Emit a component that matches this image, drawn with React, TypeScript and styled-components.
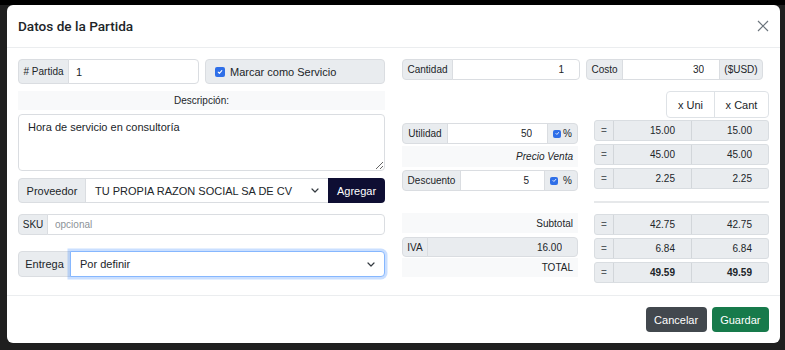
import React from 'react';
import styled, { createGlobalStyle, css } from 'styled-components';

const SMALL = 10;

const GlobalStyle = createGlobalStyle`
  html, body {
    margin: 0;
    padding: 0;
    background: #1f1f1f;
  }
  body {
    font-family: "Liberation Sans", Arial, sans-serif;
    color: #212529;
  }
  * {
    box-sizing: border-box;
  }
`;

const Page = styled.div`
  width: 785px;
  height: 350px;
  padding: 5px 0 0 7px;
  background: linear-gradient(#000 0 5px, #1f1f1f 5px);
  overflow: hidden;
`;

const Modal = styled.div`
  width: 773px;
  height: 338px;
  background: #fff;
  border-radius: 6px;
  display: flex;
  flex-direction: column;
  overflow: hidden;
`;

const Header = styled.div`
  height: 43px;
  flex: none;
  display: flex;
  align-items: center;
  justify-content: space-between;
  padding: 0 11px;
  border-bottom: 1px solid #ebedef;
`;

const Title = styled.h5`
  margin: 0;
  font-family: Roboto, "Liberation Sans", Arial, sans-serif;
  font-weight: 500;
  font-size: 13.6px;
  color: #212529;
`;

const CloseButton = styled.button`
  width: 12px;
  height: 12px;
  padding: 0;
  border: none;
  background: none;
  display: flex;
  align-items: center;
  justify-content: center;
`;

const Body = styled.div`
  flex: 1;
  display: grid;
  grid-template-columns: 367px 367px;
  column-gap: 17px;
  padding: 11px;
  border-bottom: 1px solid #ebedef;
`;

const Column = styled.div`
  display: flex;
  flex-direction: column;
`;

const Row = styled.div<{ $gap?: number; $mt?: number }>`
  display: flex;
  gap: ${(p) => p.$gap ?? 0}px;
  margin-top: ${(p) => p.$mt ?? 0}px;
`;

const Group = styled.div<{ $h: number; $w?: number; $mt?: number }>`
  display: flex;
  height: ${(p) => p.$h}px;
  width: ${(p) => (p.$w ? `${p.$w}px` : '100%')};
  margin-top: ${(p) => p.$mt ?? 0}px;
  flex: none;
  font-size: 11px;

  > * + * {
    margin-left: -1px;
  }
  > *:first-child {
    border-top-left-radius: 4px;
    border-bottom-left-radius: 4px;
  }
  > *:last-child {
    border-top-right-radius: 4px;
    border-bottom-right-radius: 4px;
  }
`;

const Addon = styled.span<{ $w: number; $fs?: number }>`
  width: ${(p) => p.$w}px;
  flex: none;
  display: flex;
  align-items: center;
  justify-content: center;
  gap: 2px;
  background: #e9ecef;
  border: 1px solid #dadde1;
  font-size: ${(p) => p.$fs ?? 11}px;
  color: #212529;
  white-space: nowrap;
`;

const Field = styled.input<{ $right?: boolean; $fs?: number; $muted?: boolean }>`
  flex: 1;
  min-width: 0;
  height: 100%;
  border: 1px solid #dadde1;
  background: ${(p) => (p.$muted ? '#e9ecef' : '#fff')};
  font-family: inherit;
  font-size: ${(p) => p.$fs ?? 11}px;
  color: #212529;
  outline: none;
  padding: ${(p) => (p.$right ? '0 15px 0 6px' : '0 7px')};
  text-align: ${(p) => (p.$right ? 'right' : 'left')};

  &::placeholder {
    color: #8c9298;
  }
`;

const SelectBox = styled.div<{ $focus?: boolean }>`
  flex: 1;
  min-width: 0;
  display: flex;
  align-items: center;
  justify-content: space-between;
  padding: 0 9px 0 9px;
  background: #fff;
  border: 1px solid #dadde1;
  font-size: 11px;
  color: #212529;
  white-space: nowrap;
  ${(p) =>
    p.$focus &&
    css`
      position: relative;
      z-index: 1;
      border-color: #86b7fe;
      box-shadow: 0 0 0 2.5px rgba(13, 110, 253, 0.22);
    `}
`;

const DarkButton = styled.button`
  width: 57px;
  flex: none;
  border: none;
  background: #0e0e33;
  color: #fff;
  font-family: inherit;
  font-size: 11px;
  padding: 0;
`;

const CheckPanel = styled.label`
  flex: 1;
  height: 25px;
  display: flex;
  align-items: center;
  gap: 5px;
  padding-left: 9px;
  background: #e9ecef;
  border: 1px solid #dadde1;
  border-radius: 4px;
  font-size: 11px;
`;

const Box = styled.span<{ $size: number }>`
  width: ${(p) => p.$size}px;
  height: ${(p) => p.$size}px;
  flex: none;
  border-radius: 2px;
  background: #2f6fe8;
  display: inline-flex;
  align-items: center;
  justify-content: center;
`;

const Bar = styled.div<{ $h: number; $mt?: number; $align: 'center' | 'right'; $italic?: boolean }>`
  height: ${(p) => p.$h}px;
  margin-top: ${(p) => p.$mt ?? 0}px;
  display: flex;
  align-items: center;
  justify-content: ${(p) => (p.$align === 'center' ? 'center' : 'flex-end')};
  padding: 0 5px;
  background: #f8f9fa;
  font-size: ${SMALL}px;
  font-style: ${(p) => (p.$italic ? 'italic' : 'normal')};
  color: #212529;
`;

const TextArea = styled.textarea`
  display: block;
  width: 100%;
  height: 57px;
  margin-top: 4px;
  padding: 6px 9px;
  border: 1px solid #dadde1;
  border-radius: 4px;
  font-family: inherit;
  font-size: 11px;
  color: #212529;
  resize: vertical;
  outline: none;
`;

const Calc = styled.div`
  display: grid;
  grid-template-columns: 176px 175px;
  column-gap: 16px;
  margin-top: 11px;
`;

const Stack = styled.div<{ $pt?: number }>`
  display: flex;
  flex-direction: column;
  padding-top: ${(p) => p.$pt ?? 0}px;
`;

const Tabs = styled.div`
  align-self: flex-end;
  display: grid;
  grid-template-columns: 47px 54px;
  height: 27px;
  border: 1px solid #dee2e6;
  border-radius: 4px;
  font-size: 11px;
`;

const Tab = styled.span`
  display: flex;
  align-items: center;
  justify-content: center;
  & + & {
    border-left: 1px solid #dee2e6;
  }
`;

const ResultRow = styled.div<{ $mt: number; $bold?: boolean }>`
  display: grid;
  grid-template-columns: 18px 78px 1fr;
  height: 21px;
  margin-top: ${(p) => p.$mt}px;
  background: #e9ecef;
  border: 1px solid #d9dde1;
  border-radius: 3px;
  font-size: ${SMALL}px;
  font-weight: ${(p) => (p.$bold ? 700 : 400)};
`;

const Cell = styled.span<{ $eq?: boolean }>`
  display: flex;
  align-items: center;
  justify-content: ${(p) => (p.$eq ? 'center' : 'flex-end')};
  padding-right: ${(p) => (p.$eq ? 0 : 16)}px;
  color: ${(p) => (p.$eq ? '#555b61' : '#212529')};
  font-weight: ${(p) => (p.$eq ? 400 : 'inherit')};
  & + & {
    border-left: 1px solid #d2d6da;
  }
`;

const Divider = styled.hr`
  margin: 12px 0 11px;
  border: none;
  height: 1.5px;
  background: #e6e8ea;
`;

const Footer = styled.div`
  height: 47px;
  flex: none;
  display: flex;
  align-items: center;
  justify-content: flex-end;
  gap: 5px;
  padding: 0 11px;
`;

const FooterButton = styled.button<{ $tone: 'dark' | 'green' }>`
  height: 25px;
  padding: 0 8.5px;
  border: none;
  border-radius: 4px;
  color: #fff;
  font-family: inherit;
  font-size: 11px;
  background: ${(p) => (p.$tone === 'dark' ? '#42484e' : '#177a4b')};
`;

const Chevron = () => (
  <svg width="8" height="5" viewBox="0 0 8 5" fill="none">
    <path d="M1 1l3 3 3-3" stroke="#343a40" strokeWidth="1.2" strokeLinecap="round" strokeLinejoin="round" />
  </svg>
);

const Check = ({ size }: { size: number }) => (
  <Box $size={size}>
    <svg width={size * 0.6} height={size * 0.6} viewBox="0 0 10 10" fill="none">
      <path d="M2 5.2l2 2 4-4.4" stroke="#fff" strokeWidth="1.8" strokeLinecap="round" strokeLinejoin="round" />
    </svg>
  </Box>
);

const results = [
  { a: '15.00', b: '15.00', mt: 2 },
  { a: '45.00', b: '45.00', mt: 3 },
  { a: '2.25', b: '2.25', mt: 3 },
];

const totals = [
  { a: '42.75', b: '42.75', mt: 0 },
  { a: '6.84', b: '6.84', mt: 3 },
  { a: '49.59', b: '49.59', mt: 3, bold: true },
];

export default function App() {
  return (
    <Page>
      <GlobalStyle />
      <Modal>
        <Header>
          <Title>Datos de la Partida</Title>
          <CloseButton aria-label="Cerrar">
            <svg width="12" height="12" viewBox="0 0 12 12">
              <path d="M1 1l10 10M11 1L1 11" stroke="#6c757d" strokeWidth="1.2" />
            </svg>
          </CloseButton>
        </Header>

        <Body>
          <Column>
            <Row $gap={6}>
              <Group $h={25} $w={181}>
                <Addon $w={51} $fs={SMALL}># Partida</Addon>
                <Field defaultValue="1" />
              </Group>
              <CheckPanel>
                <Check size={10} />
                Marcar como Servicio
              </CheckPanel>
            </Row>

            <Bar $h={19} $mt={7} $align="center">Descripción:</Bar>
            <TextArea defaultValue="Hora de servicio en consultoría" />

            <Group $h={25} $mt={7}>
              <Addon $w={68}>Proveedor</Addon>
              <SelectBox>
                TU PROPIA RAZON SOCIAL SA DE CV
                <Chevron />
              </SelectBox>
              <DarkButton>Agregar</DarkButton>
            </Group>

            <Group $h={21} $mt={11}>
              <Addon $w={30} $fs={SMALL}>SKU</Addon>
              <Field placeholder="opcional" $fs={SMALL} />
            </Group>

            <Group $h={26} $mt={16}>
              <Addon $w={53}>Entrega</Addon>
              <SelectBox $focus>
                Por definir
                <Chevron />
              </SelectBox>
            </Group>
          </Column>

          <Column>
            <Row $gap={6}>
              <Group $h={21} $w={178}>
                <Addon $w={51} $fs={SMALL}>Cantidad</Addon>
                <Field defaultValue="1" $right $fs={SMALL} />
              </Group>
              <Group $h={21} $w={177}>
                <Addon $w={37} $fs={SMALL}>Costo</Addon>
                <Field defaultValue="30" $right $fs={SMALL} />
                <Addon $w={44} $fs={SMALL}>($USD)</Addon>
              </Group>
            </Row>

            <Calc>
              <Stack $pt={32}>
                <Group $h={21}>
                  <Addon $w={46} $fs={SMALL}>Utilidad</Addon>
                  <Field defaultValue="50" $right $fs={SMALL} />
                  <Addon $w={31} $fs={SMALL}>
                    <Check size={8} />%
                  </Addon>
                </Group>
                <Bar $h={21} $mt={2} $align="right" $italic>
                  Precio Venta
                </Bar>
                <Group $h={21} $mt={3}>
                  <Addon $w={59} $fs={SMALL}>Descuento</Addon>
                  <Field defaultValue="5" $right $fs={SMALL} />
                  <Addon $w={34} $fs={SMALL}>
                    <Check size={8} />&nbsp;%
                  </Addon>
                </Group>

                <Bar $h={20} $mt={22} $align="right">Subtotal</Bar>
                <Group $h={20} $mt={4}>
                  <Addon $w={26} $fs={SMALL}>IVA</Addon>
                  <Field defaultValue="16.00" $right $muted $fs={SMALL} />
                </Group>
                <Bar $h={19} $mt={1} $align="right">TOTAL</Bar>
              </Stack>

              <Stack>
                <Tabs>
                  <Tab>x Uni</Tab>
                  <Tab>x Cant</Tab>
                </Tabs>
                {results.map((r, i) => (
                  <ResultRow key={i} $mt={r.mt}>
                    <Cell $eq>=</Cell>
                    <Cell>{r.a}</Cell>
                    <Cell>{r.b}</Cell>
                  </ResultRow>
                ))}
                <Divider />
                {totals.map((r, i) => (
                  <ResultRow key={i} $mt={r.mt} $bold={r.bold}>
                    <Cell $eq>=</Cell>
                    <Cell>{r.a}</Cell>
                    <Cell>{r.b}</Cell>
                  </ResultRow>
                ))}
              </Stack>
            </Calc>
          </Column>
        </Body>

        <Footer>
          <FooterButton $tone="dark">Cancelar</FooterButton>
          <FooterButton $tone="green">Guardar</FooterButton>
        </Footer>
      </Modal>
    </Page>
  );
}
